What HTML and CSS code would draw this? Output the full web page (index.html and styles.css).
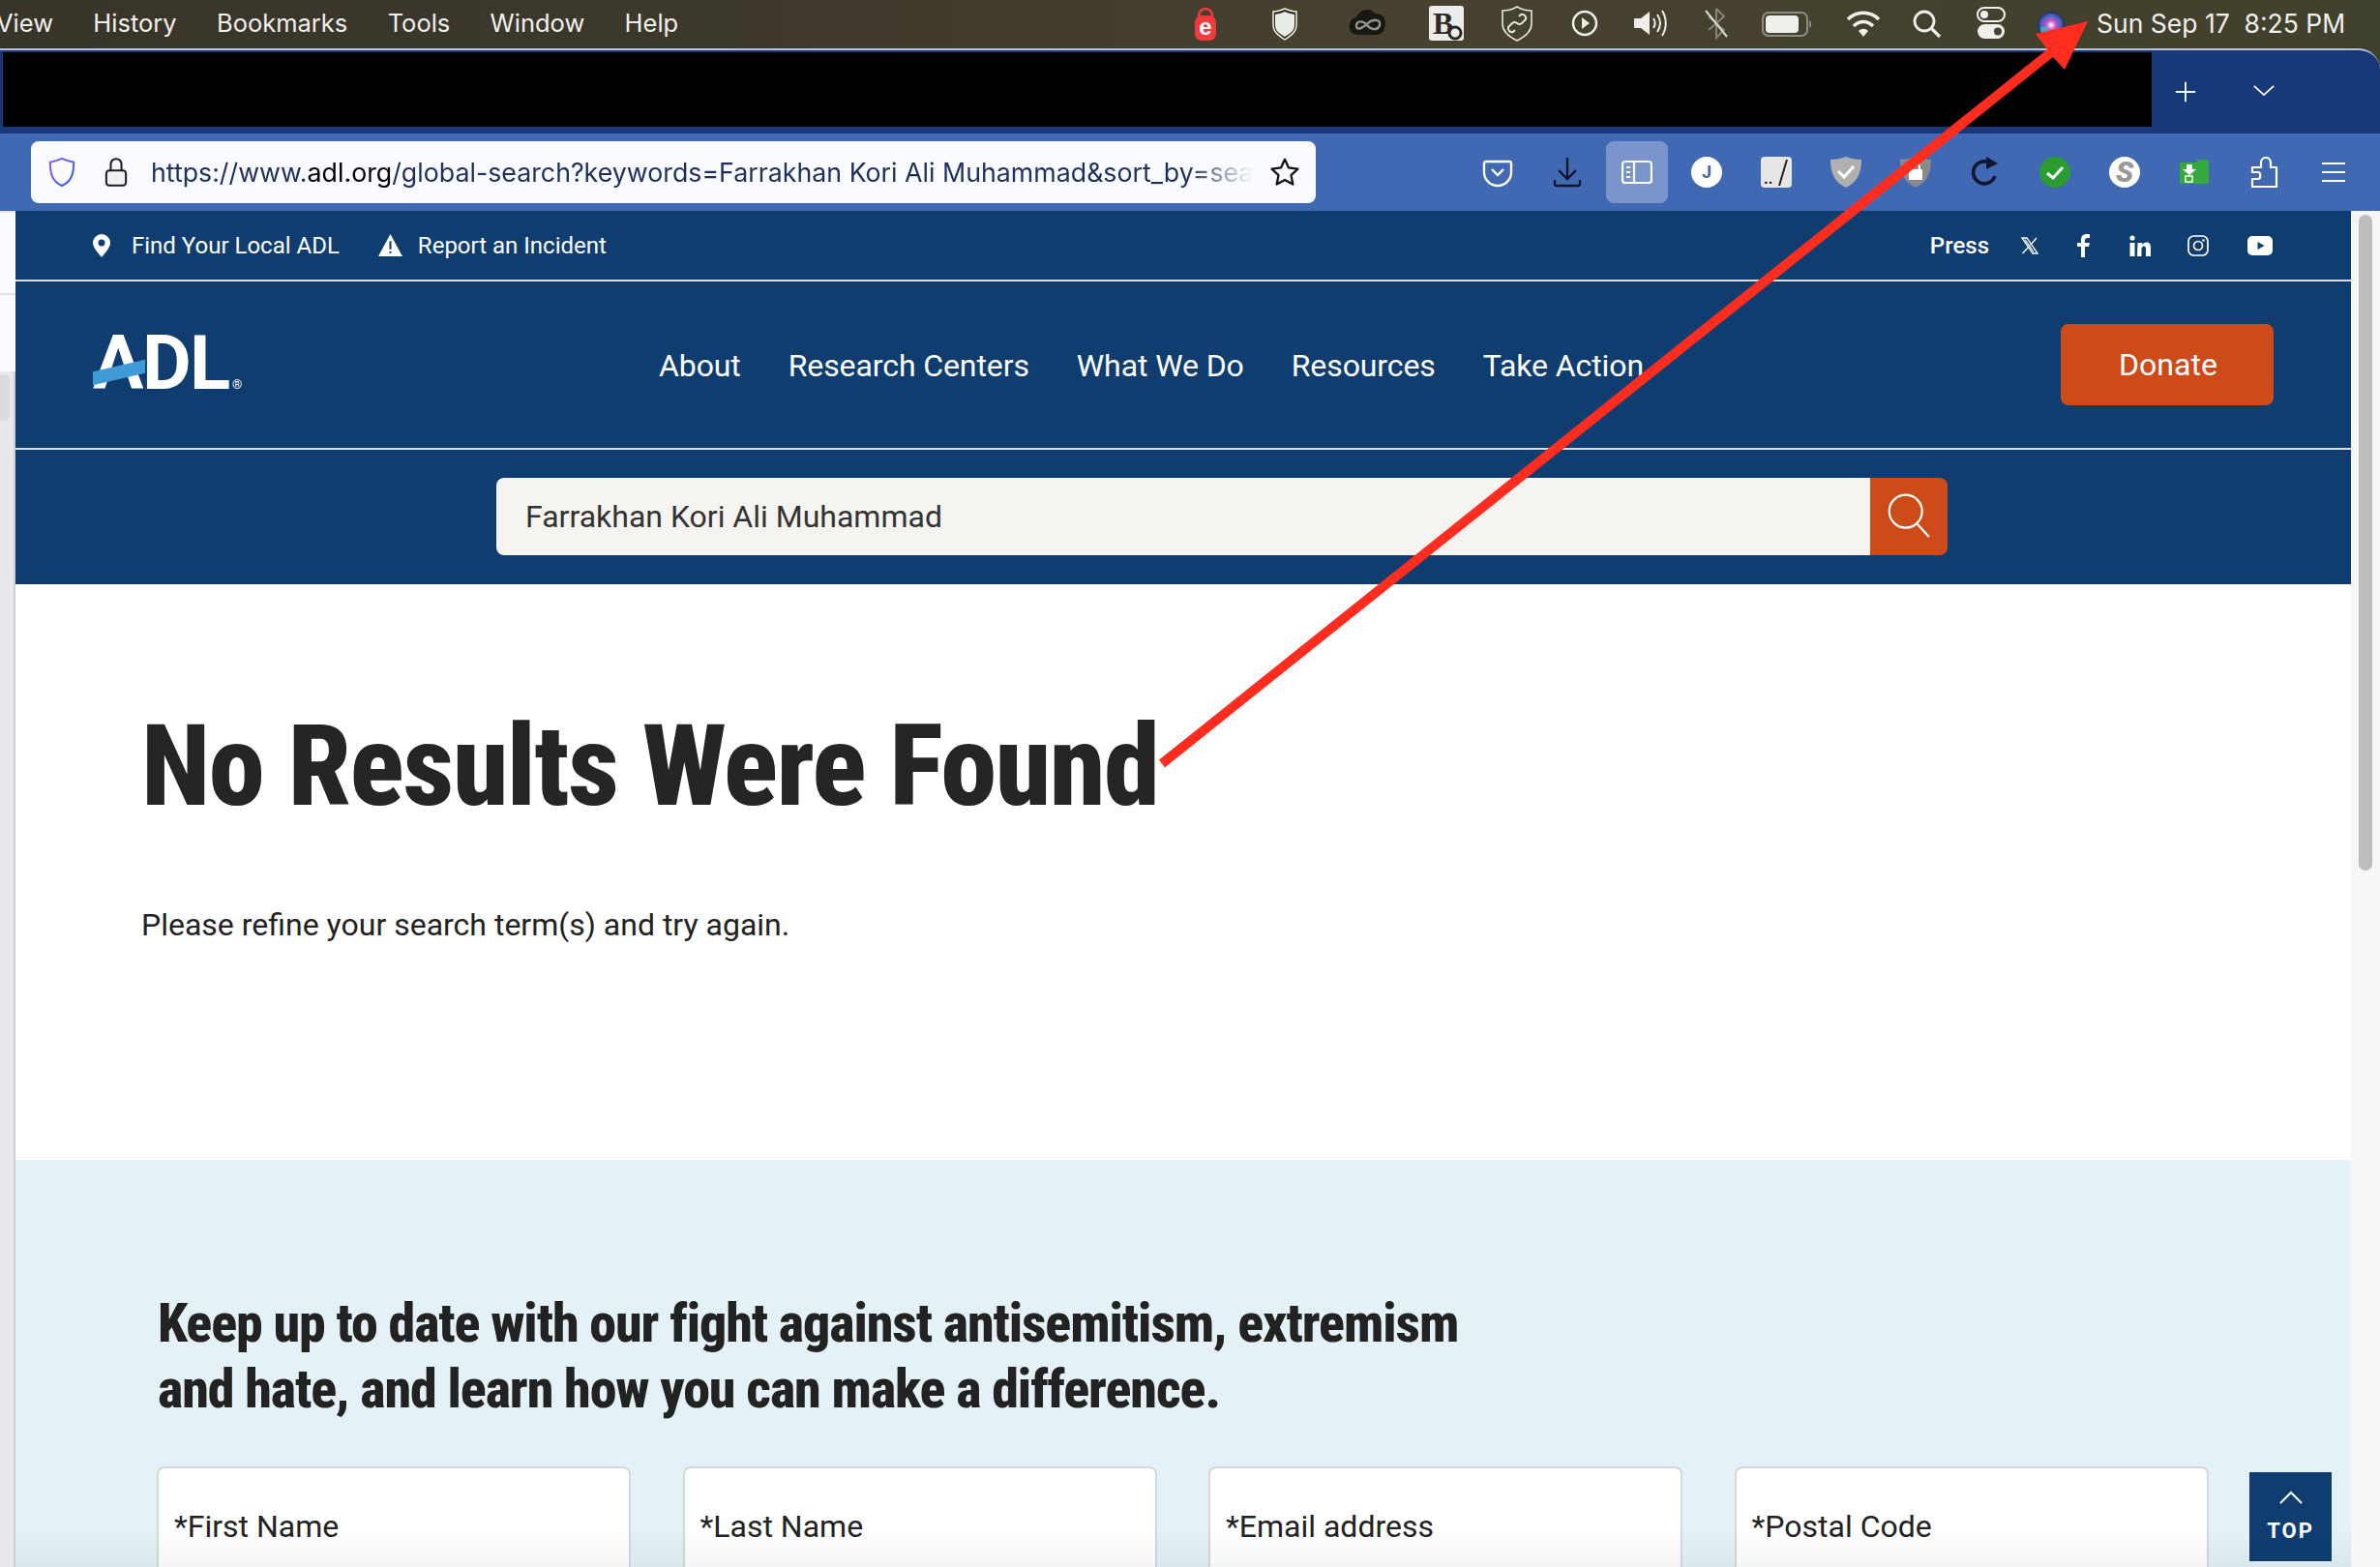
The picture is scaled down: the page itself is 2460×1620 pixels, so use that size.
FILE: index.html
```html
<!DOCTYPE html>
<html lang="en">
<head>
<meta charset="utf-8">
<title>ADL search</title>
<link rel="stylesheet" href="styles.css">
</head>
<body>
<div class="screen">
  <header class="menubar">
    <nav class="menus"><span class="menu-view">View</span><span>History</span><span>Bookmarks</span><span>Tools</span><span>Window</span><span>Help</span></nav>
    <div class="tray">
      <svg viewBox="0 0 40 40"><path d="M13 15v-3a7 7 0 0 1 14 0v3" fill="none" stroke="#ef3b3b" stroke-width="2.5"/><rect x="9" y="12" width="22" height="26" rx="7" fill="#ef3b3b"/><text x="20" y="32" class="t-e">e</text></svg>
      <svg viewBox="0 0 40 40"><path d="M20 5c5 2 9 3 12 3v14c0 7-6 11-12 15C14 33 8 29 8 22V8c3 0 7-1 12-3z" fill="#2f2d25" stroke="#eeeeea" stroke-width="1.5"/><path d="M20 8c4 2 7 2.500 10 3v11c0 6-5 9-10 12-5-3-10-6-10-12V11c3-.5 6-1 10-3z" fill="#ebebe7"/></svg>
      <svg viewBox="0 0 40 40"><path d="M5 31c-7-4-5-16 3-17 3-8 14-11 19-4 9-1 13 8 10 15-1 5-5 7-9 7H12c-3 0-5-.5-7-1z" fill="#171714"/><path d="M8 23c0-6 7-6 11-1s11 6 13 0-7-7-12-2-12 8-12 3z" fill="none" stroke="#96948a" stroke-width="2.400"/></svg>
      <svg viewBox="0 0 40 40"><rect x="2" y="2" width="36" height="36" rx="3" fill="#ececea"/><text x="6" y="31" class="t-b">B</text><circle cx="29" cy="30" r="6" fill="#ececea" stroke="#2c2a24" stroke-width="3"/></svg>
      <svg viewBox="0 0 40 40"><path d="M20 3c5 3 10 4 15 4v14c0 8-7 13-15 17C12 34 5 29 5 21V7c5 0 10-1 15-4z" fill="none" stroke="#e6e6e0" stroke-width="1.600"/><path d="M22 13l2-2a4 4 0 0 1 5 5l-4 4a4 4 0 0 1-5 0M18 27l-2 2a4 4 0 0 1-5-5l4-4a4 4 0 0 1 5 0" fill="none" stroke="#e6e6e0" stroke-width="2"/></svg>
      <svg viewBox="0 0 40 40"><circle cx="20" cy="20" r="12" fill="none" stroke="#ededea" stroke-width="2.500"/><path d="M17 14l8 6-8 6z" fill="#ededea"/></svg>
      <svg viewBox="0 0 40 40"><path d="M3 15h7l9-7v24l-9-7H3z" fill="#ededea"/><path d="M23 15c2 3 2 7 0 10M27 11c4 6 4 12 0 18M32 7c5 8 5 18 0 26" fill="none" stroke="#ededea" stroke-width="2"/></svg>
      <svg viewBox="0 0 40 40"><path d="M20 5v30l8-8-16-14M20 5l8 8-16 14" fill="none" stroke="#85837a" stroke-width="2"/><path d="M9 7l22 27" stroke="#d9d9d4" stroke-width="2"/></svg>
      <svg viewBox="0 0 40 40"><rect x="-6" y="9" width="46" height="24" rx="6" fill="none" stroke="#8e8c80" stroke-width="2"/><rect x="-3" y="12" width="34" height="18" rx="4" fill="#efefec"/><path d="M42 17c3 1 3 7 0 8z" fill="#8e8c80"/></svg>
      <svg viewBox="0 0 40 40"><path d="M4 16c9-9 23-9 32 0M10 23c6-6 14-6 20 0" fill="none" stroke="#efefec" stroke-width="3.500"/><path d="M15 28c3-3 7-3 10 0l-5 6z" fill="#efefec"/></svg>
      <svg viewBox="0 0 40 40"><circle cx="17" cy="18" r="10" fill="none" stroke="#efefec" stroke-width="2.800"/><path d="M24 25l9 9" stroke="#efefec" stroke-width="3.200"/></svg>
      <svg viewBox="0 0 40 40"><rect x="6" y="4" width="28" height="14" rx="7" fill="none" stroke="#efefec" stroke-width="2"/><circle cx="13" cy="11" r="4" fill="#efefec"/><rect x="6" y="21" width="28" height="15" rx="7.500" fill="#efefec"/><circle cx="27" cy="28.500" r="4" fill="#45412f"/></svg>
      <svg viewBox="0 0 40 40"><defs><radialGradient id="siri"><stop offset="0" stop-color="#fff"/><stop offset=".35" stop-color="#c955c8"/><stop offset=".75" stop-color="#3f62b8"/><stop offset="1" stop-color="#232a55"/></radialGradient></defs><circle cx="20" cy="22" r="14" fill="url(#siri)"/><circle cx="13" cy="27" r="4" fill="#37b7c9" opacity=".8"/></svg>
    </div>
    <div class="clock">Sun Sep 17&nbsp; 8:25 PM</div>
  </header>

  <div class="window">
    <div class="tabbar">
      <div class="tab-redacted"></div>
      <div class="tab-actions">
        <svg class="tab-plus" viewBox="0 0 26 26"><path d="M13 2v22M2 13h22" stroke="#fff" stroke-width="2"/></svg>
        <svg class="tab-chev" viewBox="0 0 26 16"><path d="M2 3l11 10L24 3" fill="none" stroke="#fff" stroke-width="2"/></svg>
      </div>
    </div>

    <div class="toolbar">
      <div class="urlbar">
        <svg class="url-shield" viewBox="0 0 32 34"><defs><linearGradient id="sh" x1="0" y1="0" x2="1" y2="1"><stop offset="0" stop-color="#9059ff"/><stop offset="1" stop-color="#2f5fe0"/></linearGradient></defs><path d="M16 2c4 2 8 3 13 4 0 12-2 21-13 26C5 27 3 18 3 6c5-1 9-2 13-4z" fill="none" stroke="url(#sh)" stroke-width="2.200"/></svg>
        <svg class="url-lock" viewBox="0 0 26 34"><path d="M7 15V8a6 6 0 0 1 12 0v7" fill="none" stroke="#1c1c1e" stroke-width="2.200"/><rect x="2" y="15" width="22" height="17" rx="3.500" fill="#f0f0f2" stroke="#1c1c1e" stroke-width="2.200"/></svg>
        <div class="url-text">https://www.<b>adl.org</b>/global-search?keywords=Farrakhan Kori Ali Muhammad&amp;sort_by=sea</div>
        <svg class="url-star" viewBox="0 0 34 34"><path d="M17 3l4.300 9.200 10 1.200-7.400 6.900 2 10L17 25.400 8.100 30.300l2-10-7.400-6.900 10-1.200z" fill="none" stroke="#111" stroke-width="2.400" stroke-linejoin="round"/></svg>
      </div>
      <div class="tools">
        <span class="tool"><svg viewBox="0 0 32 32"><path d="M4 5h24a2 2 0 0 1 2 2v9a14 14 0 0 1-28 0V7a2 2 0 0 1 2-2z" fill="none" stroke="#fff" stroke-width="2.400"/><path d="M10 13l6 6 6-6" fill="none" stroke="#fff" stroke-width="2.400"/></svg></span>
        <span class="tool"><svg viewBox="0 0 32 32"><path d="M16 1v21M7 14l9 9 9-9M3 24v4a2 2 0 0 0 2 2h22a2 2 0 0 0 2-2v-4" fill="none" stroke="#10172c" stroke-width="2.400"/></svg></span>
        <span class="tool tool-active"><svg viewBox="0 0 32 32"><rect x="1" y="5" width="30" height="22" rx="3" fill="none" stroke="#fff" stroke-width="2.200"/><path d="M13 5v22M5 11h4M5 16h4M5 21h4" stroke="#fff" stroke-width="2.200"/></svg></span>
        <span class="tool"><svg viewBox="0 0 32 32"><circle cx="16" cy="16" r="16" fill="#fff"/><text x="16" y="22" class="t-j">J</text></svg></span>
        <span class="tool"><svg viewBox="0 0 32 32"><rect width="32" height="32" rx="4" fill="#e6e6e6"/><text x="3" y="28" class="t-dots">..</text><path d="M27 3l-8 27" stroke="#222" stroke-width="2"/></svg></span>
        <span class="tool"><svg viewBox="0 0 32 32"><path d="M16 0c5 2 10 3 16 3 0 14-4 23-16 29C4 26 0 17 0 3c6 0 11-1 16-3z" fill="#b0b0b0"/><path d="M8 15l6 6 10-11" fill="none" stroke="#fff" stroke-width="3"/></svg></span>
        <span class="tool"><svg viewBox="0 0 32 32"><path d="M16 0c5 2 10 3 16 3 0 14-4 23-16 29C4 26 0 17 0 3c6 0 11-1 16-3z" fill="#8a8a8a"/><path d="M12 14v-3a4 4 0 0 1 8 0v3" fill="none" stroke="#fff" stroke-width="2"/><rect x="9" y="13" width="14" height="11" rx="1" fill="#fff"/></svg></span>
        <span class="tool"><svg viewBox="0 0 32 32"><path d="M26 20A11.500 11.500 0 1 1 17 5" fill="none" stroke="#10172c" stroke-width="3.600"/><path d="M17 0l12 7-12 6z" fill="#10172c"/></svg></span>
        <span class="tool"><svg viewBox="0 0 32 32"><circle cx="16" cy="16" r="16" fill="#2b9c2f"/><path d="M8 17l6 5 10-11" fill="none" stroke="#fff" stroke-width="3"/></svg></span>
        <span class="tool"><svg viewBox="0 0 32 32"><circle cx="16" cy="16" r="16" fill="#fff"/><text x="16" y="26" class="t-s">S</text></svg></span>
        <span class="tool"><svg viewBox="0 0 32 32"><path d="M1 8a2 2 0 0 1 2-2h16V5a2 2 0 0 1 2-2h8a2 2 0 0 1 2 2v21a2 2 0 0 1-2 2H3a2 2 0 0 1-2-2z" fill="#35a840"/><path d="M8 8h6v5h4l-7 6-7-6h4z" fill="#fff"/><rect x="7" y="20" width="7" height="6" fill="none" stroke="#fff" stroke-width="1.500"/></svg></span>
        <span class="tool"><svg viewBox="0 0 32 32"><path d="M13 11V6a5 5 0 0 1 10 0v5h6v20H4v-8h6c3 0 3-7 0-7H4v-5z" fill="none" stroke="#fff" stroke-width="2.200" stroke-linejoin="round"/></svg></span>
        <span class="tool"><svg viewBox="0 0 32 32"><path d="M4 7h24M4 16h24M4 25h24" stroke="#fff" stroke-width="2.200"/></svg></span>
      </div>
    </div>

    <div class="browser-body">
      <aside class="sidestrip"><div class="side-a"></div><div class="side-a2"></div><div class="side-b"><div class="side-pill"></div></div></aside>
      <main class="page">
        <div class="utility">
          <div class="util-left">
            <a class="util-link"><svg class="i-pin" viewBox="0 0 18 24"><path d="M9 0a9 9 0 0 1 9 9c0 5-5 10-9 15C5 19 0 14 0 9a9 9 0 0 1 9-9z" fill="#fff"/><circle cx="9" cy="9" r="3.500" fill="#0f3d70"/></svg>Find Your Local ADL</a>
            <a class="util-link"><svg class="i-warn" viewBox="0 0 24 22"><path d="M12 0l12 22H0z" fill="#fff"/><path d="M11 7h2v8h-2zM11 17h2v2h-2z" fill="#0f3d70"/></svg>Report an Incident</a>
          </div>
          <div class="util-right">
            <a class="press">Press</a>
            <svg class="soc s-x" viewBox="0 0 18 18"><path d="M1 1h5l11 16h-5zM4 2.500l9 13" fill="none" stroke="#fff" stroke-width="1.300"/><path d="M16 1l-6.500 7.500M8 10l-6.500 7" stroke="#fff" stroke-width="1.300"/></svg>
            <svg class="soc s-f" viewBox="0 0 14 24"><path d="M4 24V13H0V9h4V6c0-4 2-6 6-6h3v4h-2c-2 0-3 1-3 2.500V9h5l-1 4H8v11z" fill="#fff"/></svg>
            <svg class="soc s-in" viewBox="0 0 22 22"><circle cx="3" cy="3" r="2.600" fill="#fff"/><path d="M.5 8h5v14h-5zM8.500 8h4.700v2c1-1.500 2.800-2.400 4.500-2.400 3.500 0 4.300 2.400 4.300 5.600V22h-5v-7.500c0-1.600-.4-3-2-3s-2.500 1.400-2.500 3V22h-4.500z" fill="#fff"/></svg>
            <svg class="soc s-ig" viewBox="0 0 22 22"><rect x="1" y="1" width="20" height="20" rx="5.500" fill="none" stroke="#fff" stroke-width="1.700"/><circle cx="11" cy="11" r="4.500" fill="none" stroke="#fff" stroke-width="1.700"/><circle cx="16.500" cy="5.500" r="1.200" fill="#fff"/></svg>
            <svg class="soc s-yt" viewBox="0 0 26 20"><rect width="26" height="20" rx="5" fill="#fff"/><path d="M10.500 6l7 4-7 4z" fill="#0f3d70"/></svg>
          </div>
        </div>
        <div class="mainnav">
          <div class="logo"><span class="logo-text">ADL</span><span class="logo-bar"></span><span class="logo-reg">®</span></div>
          <nav class="navlinks"><a>About</a><a>Research Centers</a><a>What We Do</a><a>Resources</a><a>Take Action</a></nav>
          <a class="donate">Donate</a>
        </div>
        <div class="searchrow">
          <div class="searchbox">
            <div class="searchinput">Farrakhan Kori Ali Muhammad</div>
            <button class="searchbtn"><svg viewBox="0 0 40 42"><circle cx="17" cy="17" r="15.500" fill="none" stroke="#fff" stroke-width="2"/><path d="M28 29l11 12" stroke="#fff" stroke-width="2"/></svg></button>
          </div>
        </div>
        <section class="results">
          <h1>No Results Were Found</h1>
          <p>Please refine your search term(s) and try again.</p>
        </section>
        <section class="signup">
          <h2>Keep up to date with our fight against antisemitism, extremism<br>and hate, and learn how you can make a difference.</h2>
          <div class="fields">
            <div class="field">*First Name</div>
            <div class="field">*Last Name</div>
            <div class="field">*Email address</div>
            <div class="field">*Postal Code</div>
          </div>
          <a class="totop"><svg viewBox="0 0 26 14"><path d="M2 13L13 2l11 11" fill="none" stroke="#fff" stroke-width="2"/></svg><span>TOP</span></a>
          <div class="bottom-fade"></div>
        </section>
      </main>
      <div class="scrolltrack"><div class="scrollthumb"></div></div>
    </div>
  </div>

  <svg class="annot" viewBox="0 0 2460 1620"><path d="M1198 785.600L2116 51 2104 35 2158 22 2134 72 2122 59 1204 793.400z" fill="#ff2d20"/></svg>
</div>
</body>
</html>
```
FILE: styles.css
```css
* { box-sizing: border-box; }
html, body { margin: 0; padding: 0; }
body { width: 2460px; height: 1620px; overflow: hidden; font-family: Roboto, "Liberation Sans", sans-serif; background: #40412c; }
a { color: inherit; text-decoration: none; }
.screen { position: relative; width: 2460px; height: 1620px; overflow: hidden; }

/* mac menu bar */
.menubar { height: 50px; display: flex; align-items: center; padding-bottom: 3px; color: #f0f0ec; font-family: Inter, "Liberation Sans", sans-serif; font-size: 25.500px; background: linear-gradient(90deg, #39342a 0%, #3d382c 30%, #47412f 60%, #40412c 100%); }
.menus { display: flex; gap: 41.300px; margin-left: -4px; }
.tray { display: grid; grid-template-columns: 82px 86px 81px 73px 70px 68px 68px 74px 78px 66px 66px 62px 40px; align-items: center; margin-left: auto; }
.tray svg { width: 40px; height: 40px; display: block; overflow: visible; }
.clock { width: 255px; margin-left: 27px; margin-right: 38px; white-space: nowrap; font-size: 26.500px; }
.t-e { font: 700 24px "Liberation Sans", sans-serif; fill: #fff; text-anchor: middle; }
.t-b { font: 700 32px "Liberation Serif", serif; fill: #2c2a24; }

/* browser window */
.window { height: 1570px; display: flex; flex-direction: column; background: #17397a; border-top: 2px solid #b8c2d6; border-top-right-radius: 22px; overflow: hidden; }
.tabbar { height: 86px; display: flex; padding: 2px 0 7px 3px; flex: none; }
.tab-redacted { width: 2221px; background: #000; }
.tab-actions { flex: 1; display: flex; align-items: center; }
.tab-plus { width: 24px; height: 24px; margin: 5px 0 0 23px; }
.tab-chev { width: 24px; height: 15px; margin: 1px 0 0 57px; }

.toolbar { height: 80px; flex: none; display: flex; align-items: center; padding: 0 12px 0 32px; background: #4168b3; }
.urlbar { width: 1328px; height: 64px; display: flex; align-items: center; background: #f9fbff; border-radius: 8px; padding-left: 17px; }
.url-shield { width: 30px; height: 32px; flex: none; }
.url-lock { width: 24px; height: 32px; margin-left: 29px; flex: none; }
.url-text { width: 1139px; margin-left: 24px; flex: none; overflow: hidden; white-space: nowrap; font-family: Inter, "Liberation Sans", sans-serif; font-size: 26.750px; color: #1e2f5e; -webkit-mask-image: linear-gradient(90deg, #000 94%, transparent 100%); mask-image: linear-gradient(90deg, #000 94%, transparent 100%); }
.url-text b { font-weight: 400; color: #000; }
.url-star { width: 32px; height: 32px; margin-left: 17px; flex: none; }
.tools { display: flex; margin-left: auto; }
.tool { width: 72px; height: 64px; display: flex; align-items: center; justify-content: center; }
.tool svg { width: 32px; height: 32px; display: block; }
.tool-active { background: #7b95cc; width: 64px; margin: 0 4px; border-radius: 8px; }
.t-j { font: 700 18px Roboto, sans-serif; fill: #4168b3; text-anchor: middle; }
.t-dots { font: 700 16px Roboto, sans-serif; fill: #222; }
.t-s { font: italic 900 30px Roboto, sans-serif; fill: #999; text-anchor: middle; }

/* body */
.browser-body { flex: 1; display: flex; min-height: 0; }
.sidestrip { width: 16px; flex: none; display: flex; flex-direction: column; background: #e9e8ed; }
.side-a { height: 85px; background: #fafbff; border-bottom: 2px solid #e0e0e4; margin-top: 2px; flex: none; }
.side-a2 { height: 79px; background: #fafbff; flex: none; }
.side-b { flex: 1; padding-top: 3px; border-right: 2px solid #cfcfd5; }
.side-pill { width: 10px; height: 48px; background: #dcdce0; border-radius: 0 6px 6px 0; }
.page { flex: 1; min-width: 0; display: flex; flex-direction: column; background: #fff; }
.scrolltrack { width: 30px; flex: none; background: #f6f6f6; padding: 4px 8px 0; }
.scrollthumb { height: 678px; border-radius: 8px; background: #bdbdbd; }

.utility { height: 73px; flex: none; display: flex; justify-content: space-between; align-items: center; padding: 0 81px 0 80px; background: #0f3d70; border-bottom: 2px solid #dcdcdc; color: #fff; font-size: 24px; }
.util-left, .util-right { display: flex; align-items: center; }
.util-link { display: flex; align-items: center; }
.i-pin { width: 18px; height: 24px; margin-right: 22px; }
.i-warn { width: 25px; height: 23px; margin: 0 16px 0 40px; }
.press { font-weight: 500; }
.soc { display: block; }
.s-x { width: 18px; height: 18px; margin-left: 33px; }
.s-f { width: 14px; height: 24px; margin-left: 40px; }
.s-in { width: 22px; height: 22px; margin-left: 40px; }
.s-ig { width: 22px; height: 22px; margin-left: 38px; }
.s-yt { width: 26px; height: 20px; margin-left: 40px; }

.mainnav { height: 174px; flex: none; display: flex; align-items: center; padding: 0 80px; background: #0f3d70; border-bottom: 2px solid #dcdcdc; color: #fff; }
.logo { position: relative; width: 154px; height: 56px; flex: none; margin-bottom: 2px; }
.logo-text { display: block; font: 700 78px/56px Roboto, "Liberation Sans", sans-serif; letter-spacing: -1.500px; color: #fff; }
.logo-bar { position: absolute; left: 0; top: 30px; width: 54px; height: 14px; background: #3f9bd5; transform: skewY(-13deg); }
.logo-reg { position: absolute; left: 144px; top: 43px; font-size: 13px; line-height: 14px; }
.navlinks { display: flex; gap: 49px; margin-left: 431px; padding-top: 2px; font-size: 32px; letter-spacing: -.1px; }
.donate { width: 220px; height: 84px; margin-left: auto; display: flex; align-items: center; justify-content: center; padding-left: 2px; background: #cc4b18; border-radius: 8px; font-size: 32px; font-weight: 450; }

.searchrow { height: 139px; flex: none; padding: 29px 0 0 497px; background: #0f3d70; }
.searchbox { width: 1500px; height: 80px; display: flex; border-radius: 8px; overflow: hidden; }
.searchinput { flex: 1; display: flex; align-items: center; padding-left: 30px; background: #f5f4f0; color: #333; font-size: 32px; }
.searchbtn { width: 80px; border: 0; padding: 0; background: #cc4b18; display: flex; align-items: center; justify-content: center; }
.searchbtn svg { width: 44px; height: 46px; margin-bottom: 2px; }

.results { height: 595px; flex: none; padding: 130px 0 0 130px; color: #222; }
.results h1 { margin: 0; font-size: 117px; line-height: 1; font-weight: 800; font-stretch: 75%; letter-spacing: -1.600px; color: #252525; white-space: nowrap; }
.results p { margin: 85px 0 0; font-size: 32px; line-height: 40px; }

.signup { position: relative; flex: 1; min-height: 0; overflow: hidden; padding: 135px 0 0 146px; background: #e4f1f6; color: #222; }
.signup h2 { margin: 0 0 0 1px; font-size: 56px; line-height: 68px; font-weight: 800; font-stretch: 75%; letter-spacing: -1.080px; white-space: nowrap; }
.fields { display: grid; grid-template-columns: repeat(4, 490px); gap: 53.500px; margin-top: 46px; }
.field { height: 130px; padding: 38px 0 0 16px; background: #fff; border: 2px solid #d5d9da; border-radius: 8px; font-size: 32px; line-height: 44px; color: #222; }
.totop { position: absolute; left: 2309px; top: 323px; width: 85px; height: 92px; display: flex; flex-direction: column; align-items: center; background: #0f3d70; color: #fff; font-size: 22px; font-weight: 700; letter-spacing: 2px; }
.totop svg { width: 26px; height: 14px; margin-top: 19px; }
.totop span { margin-top: 15px; line-height: 26px; }
.bottom-fade { position: absolute; left: 0; right: 0; bottom: 0; height: 40px; background: linear-gradient(180deg, rgba(0,0,0,0), rgba(0,20,30,.045)); pointer-events: none; }

.annot { position: absolute; left: 0; top: 0; width: 2460px; height: 1620px; pointer-events: none; }
```
